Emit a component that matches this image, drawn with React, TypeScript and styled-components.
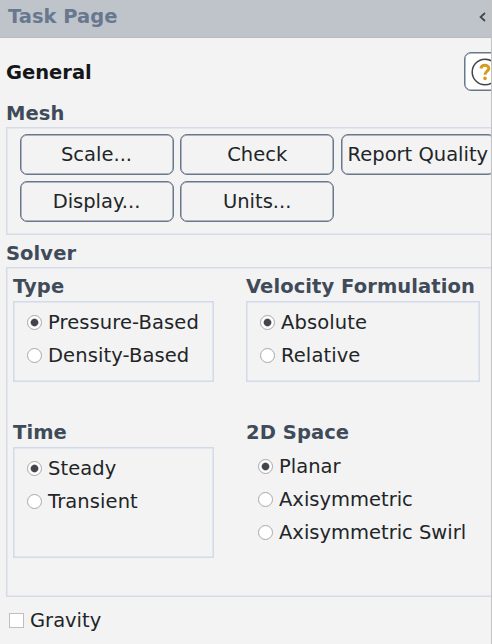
import React from "react";
import styled, { createGlobalStyle } from "styled-components";

const GlobalStyle = createGlobalStyle`
  * { box-sizing: border-box; }
  body {
    margin: 0;
    overflow: hidden;
    background: #f3f3f3;
    color: #222528;
    font: 19.5px/24px "DejaVu Sans", sans-serif;
  }
`;

const Panel = styled.div`
  width: 492px;
  height: 644px;
  overflow: hidden;
  border-right: 1px solid #c2c2c3;
  white-space: nowrap;
`;

const Header = styled.header`
  display: flex;
  align-items: center;
  justify-content: space-between;
  height: 38px;
  padding: 0 5px 3px 8px;
  background: #bfc4cb;
  border-bottom: 1px solid #b9bbbe;
  color: #67788f;
  font-weight: bold;
`;

const TitleRow = styled.div`
  display: flex;
  align-items: center;
  height: 39px;
  margin: 14px 0 10px 6px;
`;

const Title = styled.h1`
  width: 458px;
  flex: none;
  margin: 0;
  padding-top: 2px;
  font-size: inherit;
  color: #141619;
`;

const HelpButton = styled.button`
  flex: none;
  width: 42px;
  height: 39px;
  padding: 0 0 0 6px;
  border: 1px solid #68778a;
  border-radius: 7px;
  background: #fff;
  box-shadow: inset 0 0 0 0.5px #68778a;
  svg { display: block; }
`;

const Label = styled.h2<{ $drop?: number }>`
  margin: 0;
  height: 26px;
  padding-top: ${(p) => p.$drop ?? 0}px;
  font-size: inherit;
  line-height: 24px;
  letter-spacing: 0.08px;
  color: #3f4b59;
`;

const Section = styled.section<{ $gap?: number }>`
  margin: ${(p) => p.$gap ?? 0}px 0 0 6px;
`;

const Frame = styled.div<{ $height: number }>`
  width: 500px;
  height: ${(p) => p.$height}px;
  border: 1px solid #d5dbe8;
  box-shadow: inset 0 0 0 0.5px #d5dbe8;
`;

const ButtonGrid = styled.div`
  display: grid;
  grid-template-columns: repeat(3, 154px);
  grid-auto-rows: 41px;
  gap: 6px 6.7px;
  padding: 6px 12.5px;
`;

const PushButton = styled.button`
  padding: 1px 0 0;
  border: 1px solid #68778a;
  border-radius: 7px;
  background: #f3f3f3;
  box-shadow: inset 0 0 0 0.5px #68778a;
  color: inherit;
  font: inherit;
`;

const SolverGrid = styled.div`
  display: grid;
  grid-template-columns: 201px 234px;
  grid-template-rows: 146px auto;
  column-gap: 32px;
  padding: 7px 6px;
`;

const Options = styled.div<{ $height?: number; $plain?: boolean }>`
  height: ${(p) => p.$height ?? 111}px;
  padding: ${(p) => (p.$plain ? "3px 12px" : "4px 13px")};
  border: ${(p) => (p.$plain ? "0" : "1px solid #d3daea")};
  box-shadow: ${(p) => (p.$plain ? "none" : "inset 0 0 0 0.5px #d3daea")};
  letter-spacing: ${(p) => (p.$plain ? "0" : "0.1px")};
`;

const Option = styled.label`
  display: flex;
  align-items: center;
  gap: 6px;
  height: 33px;
`;

const Radio = styled.input.attrs({ type: "radio" })`
  appearance: none;
  flex: none;
  width: 15px;
  height: 15px;
  margin: 0;
  border: 1px solid #a8a8a8;
  border-radius: 50%;
  background: #fff;
  &:checked {
    background: radial-gradient(circle, #42454a 0 3.2px, #fff 4.4px);
  }
`;

const CheckRow = styled(Option)`
  margin: 7px 0 0 9px;
`;

const Checkbox = styled.input.attrs({ type: "checkbox" })`
  appearance: none;
  flex: none;
  width: 15px;
  height: 15px;
  margin: 0;
  border: 1px solid #bfbfbf;
  background: #fff;
`;

type GroupProps = {
  title: string;
  options: string[];
  height?: number;
  plain?: boolean;
};

function RadioGroup({ title, options, height, plain }: GroupProps) {
  return (
    <div>
      <Label>{title}</Label>
      <Options $height={height} $plain={plain}>
        {options.map((name, i) => (
          <Option key={name}>
            <Radio name={title} defaultChecked={i === 0} />
            {name}
          </Option>
        ))}
      </Options>
    </div>
  );
}

const HelpIcon = () => (
  <svg width="28" height="28" viewBox="0 0 28 28" fill="none">
    <circle cx="14" cy="14" r="12.8" stroke="#42464b" strokeWidth="1.5" />
    <path d="M9.9 10.5C10.3 6.4 17.8 6.2 17.8 10.5C17.8 13.1 14 13.2 14 16.8" stroke="#d69c20" strokeWidth="3" />
    <circle cx="14" cy="20.4" r="1.8" fill="#d69c20" />
  </svg>
);

const CollapseIcon = () => (
  <svg width="7" height="10" viewBox="0 0 7 10" fill="none">
    <path d="M6 1L1.6 5L6 9" stroke="#43484e" strokeWidth="1.8" />
  </svg>
);

export default function App() {
  return (
    <>
      <GlobalStyle />
      <Panel>
        <Header>
          Task Page
          <CollapseIcon />
        </Header>
        <TitleRow>
          <Title>General</Title>
          <HelpButton aria-label="Help">
            <HelpIcon />
          </HelpButton>
        </TitleRow>
        <Section>
          <Label $drop={1}>Mesh</Label>
          <Frame $height={108}>
            <ButtonGrid>
              {["Scale...", "Check", "Report Quality", "Display...", "Units..."].map((name) => (
                <PushButton key={name}>{name}</PushButton>
              ))}
            </ButtonGrid>
          </Frame>
        </Section>
        <Section $gap={6}>
          <Label $drop={1}>Solver</Label>
          <Frame $height={330}>
            <SolverGrid>
              <RadioGroup title="Type" options={["Pressure-Based", "Density-Based"]} height={81} />
              <RadioGroup title="Velocity Formulation" options={["Absolute", "Relative"]} height={81} />
              <RadioGroup title="Time" options={["Steady", "Transient"]} />
              <RadioGroup title="2D Space" options={["Planar", "Axisymmetric", "Axisymmetric Swirl"]} plain />
            </SolverGrid>
          </Frame>
        </Section>
        <CheckRow>
          <Checkbox />
          Gravity
        </CheckRow>
      </Panel>
    </>
  );
}
